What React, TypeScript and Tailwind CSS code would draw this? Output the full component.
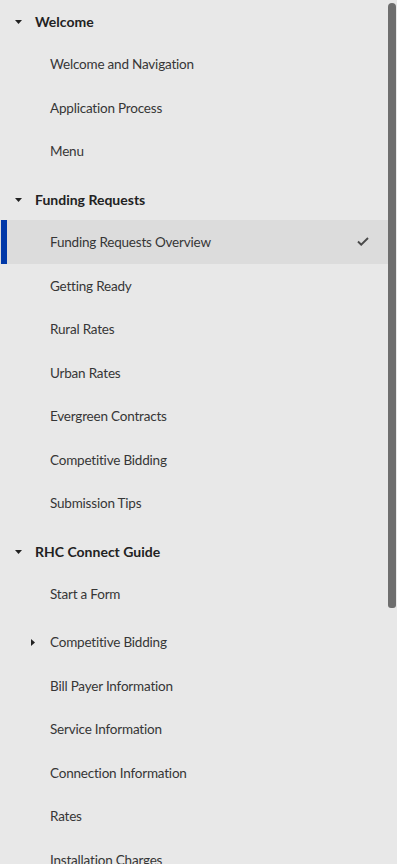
type Item = { label: string; active?: boolean; expandable?: boolean };
type Group = { title: string; items: Item[] };

const GROUPS: Group[] = [
  {
    title: "Welcome",
    items: [
      { label: "Welcome and Navigation" },
      { label: "Application Process" },
      { label: "Menu" },
    ],
  },
  {
    title: "Funding Requests",
    items: [
      { label: "Funding Requests Overview", active: true },
      { label: "Getting Ready" },
      { label: "Rural Rates" },
      { label: "Urban Rates" },
      { label: "Evergreen Contracts" },
      { label: "Competitive Bidding" },
      { label: "Submission Tips" },
    ],
  },
  {
    title: "RHC Connect Guide",
    items: [
      { label: "Start a Form" },
      { label: "Competitive Bidding", expandable: true },
      { label: "Bill Payer Information" },
      { label: "Service Information" },
      { label: "Connection Information" },
      { label: "Rates" },
      { label: "Installation Charges" },
      { label: "Recurring Charges" },
      { label: "Documents" },
    ],
  },
];

function CaretDown() {
  return (
    <svg width="7" height="4" viewBox="0 0 7 4" className="text-[#222]">
      <path d="M0 0h7L3.5 4z" fill="currentColor" />
    </svg>
  );
}

function CaretRight() {
  return (
    <svg width="4" height="7" viewBox="0 0 4 7" className="text-[#222]">
      <path d="M0 0v7l4-3.5z" fill="currentColor" />
    </svg>
  );
}

function Check() {
  return (
    <svg width="12" height="9" viewBox="0 0 12 9" fill="none">
      <path d="M1 4.5l3.2 3.2L11 1" stroke="#4a4a4a" strokeWidth="1.9" />
    </svg>
  );
}

function NavRow({ item }: { item: Item }) {
  return (
    <div
      className={
        "relative flex h-[43.5px] items-center " +
        (item.active ? "bg-[#dcdcdc] " : "") +
        (item.expandable ? "mt-[4.5px]" : "")
      }
    >
      {item.active && <div className="absolute left-px top-0 h-full w-[6px] bg-[#0038a8]" />}
      <div className="flex w-[50px] justify-end pr-[15px] pt-px">{item.expandable && <CaretRight />}</div>
      <span className="flex-1 pt-px text-[13.5px] tracking-[-0.2px] text-[#363636]">{item.label}</span>
      {item.active && (
        <div className="pr-[19px]">
          <Check />
        </div>
      )}
    </div>
  );
}

export default function App() {
  return (
    <div
      className="flex h-[864px] w-[397px] overflow-hidden bg-[#e8e8e8]"
      style={{ fontFamily: "Lato, 'Noto Sans', sans-serif" }}
    >
      <nav className="w-[388px] flex-shrink-0">
        {GROUPS.map((g, i) => (
          <div key={g.title} className={i > 0 ? "mt-[5.5px]" : ""}>
            <div className="flex h-[42px] items-center">
              <div className="flex w-[35px] justify-start pl-[15px] pt-px">
                <CaretDown />
              </div>
              <span className="text-[14px] font-bold text-[#222]">{g.title}</span>
            </div>
            {g.items.map((it) => (
              <NavRow key={it.label} item={it} />
            ))}
          </div>
        ))}
      </nav>
      {/* scrollbar */}
      <div className="w-[9px] flex-shrink-0 pt-[3px]">
        <div className="h-[605px] w-[8px] rounded-t-[4px] rounded-b-[3px] bg-[#6e6e6e]" />
      </div>
    </div>
  );
}
